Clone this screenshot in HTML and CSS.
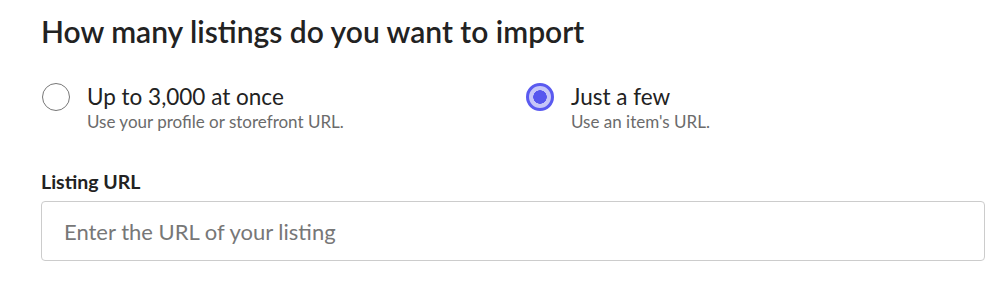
FILE: index.html
```html
<!DOCTYPE html>
<html lang="en">
<head>
    <meta charset="UTF-8">
    <meta name="viewport" content="width=device-width, initial-scale=1.0">
    <title>Import listings</title>
    <link rel="stylesheet" href="styles.css">
</head>
<body>
    <div class="container">
        <h1 class="title">How many listings do you want to import</h1>

        <div class="options">
            <label class="option">
                <input type="radio" name="importType" value="bulk">
                <span class="radio"></span>
                <span class="option-text">
                    <span class="option-title">Up to 3,000 at once</span>
                    <span class="option-desc">Use your profile or storefront URL.</span>
                </span>
            </label>
            <label class="option">
                <input type="radio" name="importType" value="few" checked>
                <span class="radio"></span>
                <span class="option-text">
                    <span class="option-title">Just a few</span>
                    <span class="option-desc">Use an item's URL.</span>
                </span>
            </label>
        </div>

        <div class="input-group">
            <label for="listingUrl">Listing URL</label>
            <input type="text" id="listingUrl" placeholder="Enter the URL of your listing">
        </div>
    </div>
</body>
</html>
```

FILE: styles.css
```css
* {
    margin: 0;
    padding: 0;
    box-sizing: border-box;
    font-family: Lato, "Open Sans", sans-serif;
}

body {
    background: white;
    color: #222;
}

.container {
    width: 944px;
    margin-left: 41px;
    padding-top: 13px;
}

.title {
    font-size: 30px;
    font-weight: 600;
    line-height: 36px;
    color: #222;
}

.options {
    display: grid;
    grid-template-columns: 1fr 1fr;
    gap: 24px;
    margin-top: 34px;
}

.option {
    display: flex;
    align-items: flex-start;
    cursor: pointer;
}

.option input {
    display: none;
}

.radio {
    width: 28px;
    height: 28px;
    border: 1.5px solid #777;
    border-radius: 50%;
    margin-left: 1px;
    flex-shrink: 0;
}

.option input:checked + .radio {
    border: 3px solid #5a5af0;
    background: radial-gradient(circle, #5656ee 0 6.5px, #c6c6f8 7px);
}

.option-text {
    display: flex;
    flex-direction: column;
    margin-left: 17px;
}

.option-title {
    font-size: 22.5px;
    line-height: 28px;
    color: #222;
}

.option-desc {
    font-size: 17px;
    line-height: 22px;
    color: #6b6b6b;
}

.input-group {
    margin-top: 37px;
}

.input-group label {
    display: block;
    font-size: 19.5px;
    font-weight: 700;
    line-height: 24px;
    color: #222;
    margin-bottom: 7px;
}

.input-group input {
    width: 100%;
    height: 60px;
    padding: 0 22px;
    border: 1px solid #ccc;
    border-radius: 4px;
    font-size: 22px;
    color: #222;
    outline: none;
}

.input-group input::placeholder {
    color: #777;
}
```
